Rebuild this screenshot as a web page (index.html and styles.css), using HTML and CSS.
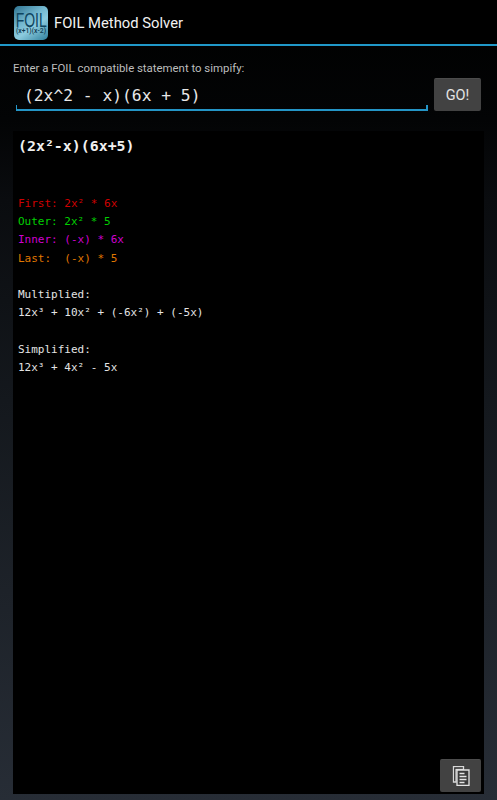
FILE: index.html
```html
<!DOCTYPE html>
<html lang="en">
<head>
    <meta charset="UTF-8">
    <title>FOIL Method Solver</title>
    <link rel="stylesheet" href="styles.css">
</head>
<body>
<div class="action-bar">
    <div class="app-icon">
        <span class="app-icon-word">FOIL</span>
        <span class="app-icon-sub">(x+1)(x-2)</span>
    </div>
    <div class="app-title">FOIL Method Solver</div>
</div>

<div class="form">
    <div class="prompt">Enter a FOIL compatible statement to simpify:</div>
    <div class="input-row">
        <div class="input">(2x^2 - x)(6x + 5)</div>
        <button class="btn btn-go">GO!</button>
    </div>
</div>

<div class="output">
    <div class="heading">(2x²-x)(6x+5)</div>
    <div class="line c-red">First: 2x² * 6x</div>
    <div class="line c-green">Outer: 2x² * 5</div>
    <div class="line c-purple">Inner: (-x) * 6x</div>
    <div class="line c-orange">Last:  (-x) * 5</div>
    <div class="line gap">Multiplied:</div>
    <div class="line">12x³ + 10x² + (-6x²) + (-5x)</div>
    <div class="line gap">Simplified:</div>
    <div class="line">12x³ + 4x² - 5x</div>

    <button class="btn btn-copy" aria-label="Copy">
        <svg width="18" height="20" viewBox="0 0 18 20">
            <path d="M1.500 .7h10v2.800H4v12.500H1.500z" fill="#2a2a2a" stroke="#d8d8d8" stroke-width="1.300"/>
            <path d="M5 4h12v15.300H5z" fill="#3a3a3a" stroke="#e4e4e4" stroke-width="1.300"/>
            <path d="M7.500 7.500h5M7.500 10.500h7M7.500 13.500h7M7.500 16.500h5" stroke="#e4e4e4" stroke-width="1.300"/>
        </svg>
    </button>
</div>
</body>
</html>
```

FILE: styles.css
```css
* {
    box-sizing: border-box;
}

html, body {
    height: 100%;
}

body {
    margin: 0;
    height: 800px;
    overflow: hidden;
    display: flex;
    flex-direction: column;
    background: linear-gradient(#000 0, #030405 15%, #0a0c0f 25%, #14181d 50%, #272d36 100%);
    font-family: Roboto, "Liberation Sans", sans-serif;
    color: #fff;
}

.action-bar {
    height: 46px;
    flex: none;
    display: flex;
    align-items: center;
    gap: 6px;
    padding: 2px 0 0 14px;
    background: #000;
    border-bottom: 2px solid #2098c8;
}

.app-icon {
    width: 34px;
    height: 34px;
    border-radius: 5px;
    background: linear-gradient(145deg, #2f7390 0, #74b8d0 40%, #8ccbde 60%, #2f7f9c 100%);
    color: #0f4560;
    display: flex;
    flex-direction: column;
    align-items: center;
}

.app-icon-word {
    flex: none;
    font-family: "Liberation Sans", sans-serif;
    font-size: 20px;
    line-height: 15px;
    margin-top: 7px;
    transform: scaleX(.7);
}

.app-icon-sub {
    font-size: 6.800px;
    font-weight: 500;
    line-height: 6px;
    white-space: nowrap;
    color: #103a50;
}

.app-title {
    font-size: 14.800px;
    color: #f2f2f2;
}

.form {
    flex: none;
    height: 85px;
    padding: 16px 16px 0 13px;
}

.prompt {
    font-size: 11.400px;
    line-height: 13px;
    color: #bdbdbd;
}

.input-row {
    display: flex;
    align-items: flex-end;
    gap: 6px;
    margin-top: 3px;
}

.input {
    flex: 1;
    height: 33px;
    padding: 7px 0 0 7px;
    margin-left: 3px;
    font-family: "DejaVu Sans Mono", monospace;
    font-size: 16.300px;
    line-height: 22px;
    white-space: pre;
    color: #e8e8e8;
    border-bottom: 2px solid #2495c6;
    border-left: 1px solid #2495c6;
    border-right: 2px solid #2495c6;
    border-image: linear-gradient(transparent 28px, #2495c6 28px) 1;
}

.btn {
    padding: 0;
    border: 0;
    border-radius: 2px;
    background: #424242;
    border-top: 1px solid #4c4c4c;
    display: flex;
    align-items: center;
    justify-content: center;
}

.btn-go {
    width: 47px;
    height: 33px;
    color: #e4e4e4;
    font-family: Roboto, sans-serif;
    font-size: 14.500px;
    font-weight: 400;
}

.output {
    position: relative;
    flex: 1;
    margin: 0 13px 6px;
    padding: 6px 5px;
    background: #000;
    font-family: "DejaVu Sans Mono", monospace;
    font-size: 11px;
}

.heading {
    font-size: 14.900px;
    font-weight: bold;
    line-height: 18px;
    color: #f0f0f0;
    margin-bottom: 40px;
}

.line {
    height: 18.200px;
    line-height: 18.200px;
    white-space: pre;
    color: #e4e4e4;
}

.gap {
    margin-top: 18.200px;
}

.c-red {
    color: #d00000;
}

.c-green {
    color: #00d000;
}

.c-purple {
    color: #d000d0;
}

.c-orange {
    color: #e07800;
}

.btn-copy {
    position: absolute;
    right: 3px;
    bottom: 2px;
    width: 41px;
    height: 33px;
}
```
